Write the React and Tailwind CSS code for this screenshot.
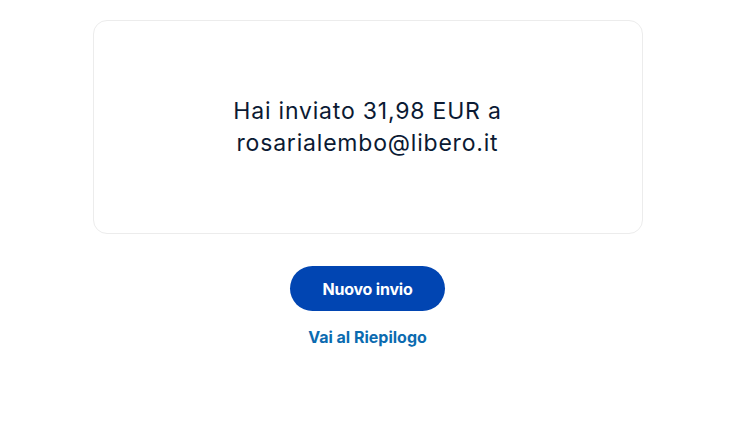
export default function App() {
  return (
    <div className="min-h-[445px] w-full bg-white font-['Inter',sans-serif] pt-5 pr-[5px]">
      <div className="mx-auto w-[550px] h-[214px] rounded-[14px] border border-[#ececec] bg-white flex items-center justify-center">
        <p className="text-center text-[23px] leading-[32px] tracking-[0.8px] text-[#0b1a33]">
          Hai inviato 31,98 EUR a
          <br />
          rosarialembo@libero.it
        </p>
      </div>
      <div className="flex flex-col items-center mt-[32px]">
        <button className="w-[155px] h-[45px] rounded-full bg-[#0145b2] text-white font-bold text-[16px] tracking-[-0.2px]">
          Nuovo invio
        </button>
        <a className="mt-[14px] text-[16px] font-bold text-[#0b6bb0]">
          Vai al Riepilogo
        </a>
      </div>
    </div>
  );
}
